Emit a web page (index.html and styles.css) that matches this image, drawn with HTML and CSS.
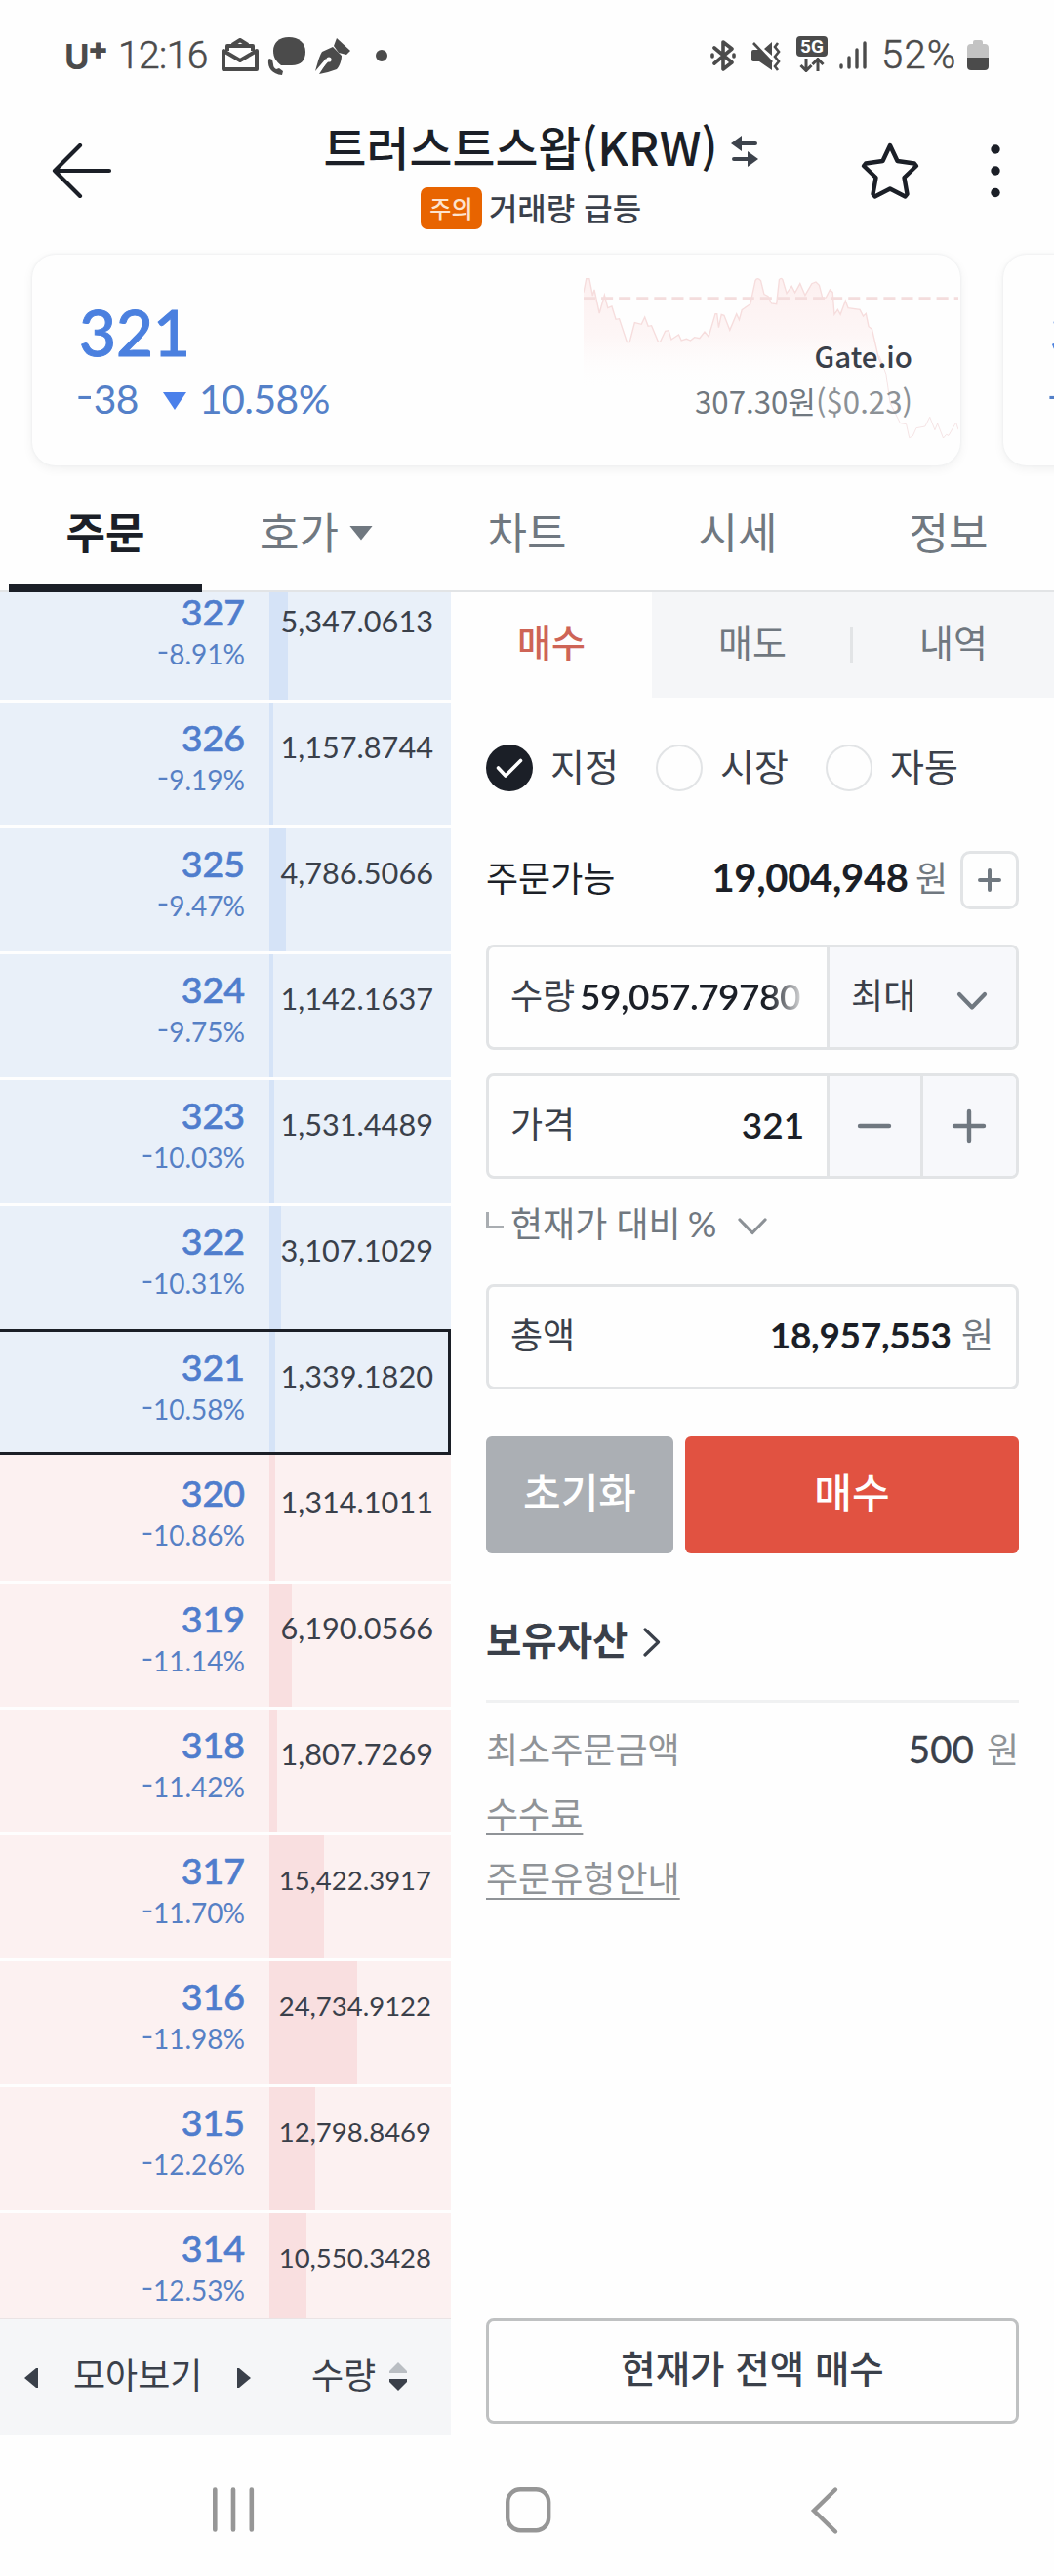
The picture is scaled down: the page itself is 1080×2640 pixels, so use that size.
FILE: index.html
```html
<!DOCTYPE html>
<html lang="ko">
<head>
<meta charset="utf-8">
<title>트러스트스왑(KRW)</title>
<link rel="stylesheet" href="styles.css">
</head>
<body>
<div class="phone">
  <div class="status">
    <div class="status-left">
      <span class="carrier">U<b>+</b></span>
      <span class="clock">12:16</span>
      <svg class="i-mail" width="38" height="34" viewBox="0 0 38 34" fill="none" stroke="#4b4b4b" stroke-width="4" stroke-linejoin="round"><path d="M11 7 19 2l8 5"/><path d="M6 13V8h26v5"/><path d="M2 13v19h34V13L19 23z"/></svg>
      <svg class="i-talk" width="40" height="40" viewBox="0 0 40 40" fill="#4b4b4b"><path d="M22 0C32 0 39 6 39 15s-5 14-14 14H14C9 25 6 21 6 14 6 6 12 0 22 0z"/><path d="M1 23c-1 9 4 15 14 16l1-4-4-3-3 1c-2-1-3-3-3-5l-1-5-3-1z"/></svg>
      <svg class="i-pen" width="36" height="38" viewBox="0 0 36 38" fill="#4b4b4b"><path d="M0 34C2 28 3 21 7 14l11-5 9 9c0 5-2 11-5 14-6 2-12 4-18 5l9-14-2-2z"/><path d="M22 0l14 13-4 4-8-2-5-7z"/><circle cx="14" cy="22" r="2.6" fill="#fff"/><path d="M14 22 2 36" stroke="#fff" stroke-width="1.8"/></svg>
      <i class="status-dot"></i>
    </div>
    <div class="status-right">
      <svg width="28" height="32" viewBox="0 0 28 32" fill="none" stroke="#4b4b4b" stroke-width="3.6" stroke-linejoin="round" stroke-linecap="round"><path d="M5 8 23 23 14 30V2l9 7L5 24"/><path d="M3 15v2M25 15v2"/></svg>
      <svg class="i-mute" width="30" height="30" viewBox="0 0 30 30" fill="#4b4b4b"><path d="M0 10q0-2 2-2h6l13 13v8L8 20H2q-2 0-2-2zM13 7l8-7v14z"/><path d="M2 1 21 21" stroke="#4b4b4b" stroke-width="2.6"/><path d="M27 1l-3 4 4 5-4 5 4 5-4 5 3 4" fill="none" stroke="#4b4b4b" stroke-width="2.6"/></svg>
      <div class="net"><span>5G</span><svg width="26" height="15" viewBox="0 0 26 15" fill="none" stroke="#4b4b4b" stroke-width="3"><path d="M7 1v12M1.500 8 7 13.500 12.500 8M19 14V2M13.500 7 19 1.500 24.500 7"/></svg></div>
      <svg class="i-signal" width="28" height="30" viewBox="0 0 28 30" stroke="#4b4b4b" stroke-width="3.4" stroke-linecap="round"><path d="M2 26v2M10 18v10M18 10v18M26 3v25"/></svg>
      <span class="percent">52%</span>
      <svg class="i-battery" width="22" height="32" viewBox="0 0 22 32"><path fill="#c3c3c3" d="M6 2q0-2 2-2h6q2 0 2 2v2h2q4 0 4 4v10H0V8q0-4 4-4h2z"/><path fill="#4b4b4b" d="M0 18h22v9q0 4-4 4H4q-4 0-4-4z"/></svg>
    </div>
  </div>

  <header class="header">
    <div class="header-back">
      <svg width="62" height="56" viewBox="0 0 62 56" fill="none" stroke="#1b1f27" stroke-width="4.200" stroke-linecap="round" stroke-linejoin="round"><path d="M29 2 3 28l26 26M3 28h56"/></svg>
    </div>
    <div class="header-title">
      <h1>트러스트스왑(KRW)
        <svg width="28" height="34" viewBox="0 0 28 34" fill="#3d434c"><path d="M0 9 11 1v6h14q2 0 2 2t-2 2H11v6zM28 25 17 17v6H3q-2 0-2 2t2 2h14v6z"/></svg>
      </h1>
      <p><span class="badge">주의</span>거래량 급등</p>
    </div>
    <div class="header-actions">
      <svg width="60" height="60" viewBox="0 0 60 60" fill="none" stroke="#1b1f27" stroke-width="4.400" stroke-linejoin="round"><path d="M30 4 37.500 20 55 22.500 57 25 44.500 37 47.500 54 45.500 56.500 30 48.500 14.500 56.500 12.500 54 15.500 37 3 25 5 22.500 22.500 20z"/></svg>
      <svg width="10" height="56" viewBox="0 0 10 56" fill="#1b1f27"><circle cx="5" cy="6" r="4.700"/><circle cx="5" cy="28" r="4.700"/><circle cx="5" cy="50.500" r="4.700"/></svg>
    </div>
  </header>

  <section class="carousel">
    <article class="card">
      <svg class="spark" width="384" height="170" viewBox="168 100 1115 510" preserveAspectRatio="none">
        <defs><linearGradient id="fade" x1="0" y1="0" x2="0" y2="1"><stop offset="0" stop-color="#fdf0f0"/><stop offset=".35" stop-color="#fdf6f6"/><stop offset=".7" stop-color="#fff" stop-opacity="0"/></linearGradient></defs>
        <path fill="url(#fade)" d="M168 150 176 108h9l10 52 5-18 15 72 15-56 10 40 12-5 12 40 10-2 23 72h8l15-60 20 5 10-22 10 28 10-2 20 50h6l15-33 10-2 8 28 22-15 8 18 15-5 12 5 12-10 15 3 15-20 12 15 20-70 5 0 5 42 8-40 8 3 17 45 20-50 8 18 8-30 25-18 15-72q6-12 16 0l10 42 12 6 10 22 15 2 8-75q6-8 10 0l12 42 15-22 10 20 15-28 15 36 20-36 12-5 10 10 10 40 10-2 12-24 8 8 5 68 10-15 8 15 15-42 8 22 35 5 10 20 8-8 8 40 10 8 20 90 14 30 18 90 16 40 18 12V610H168z"/>
        <path class="spark-base" d="M168 168H1283"/>
        <path class="spark-line" d="M168 150 176 108h9l10 52 5-18 15 72 15-56 10 40 12-5 12 40 10-2 23 72h8l15-60 20 5 10-22 10 28 10-2 20 50h6l15-33 10-2 8 28 22-15 8 18 15-5 12 5 12-10 15 3 15-20 12 15 20-70 5 0 5 42 8-40 8 3 17 45 20-50 8 18 8-30 25-18 15-72q6-12 16 0l10 42 12 6 10 22 15 2 8-75q6-8 10 0l12 42 15-22 10 20 15-28 15 36 20-36 12-5 10 10 10 40 10-2 12-24 8 8 5 68 10-15 8 15 15-42 8 22 35 5 10 20 8-8 8 40 10 8 20 90 14 30"/>
        <path class="spark-line thin" d="M1048 345 1068 402 1080 490 1110 552 1128 555 1137 597 1147 592 1158 567 1184 562 1198 533 1213 573 1221 553 1238 598 1247 587 1254 590 1276 550 1283 572"/>
      </svg>
      <div class="quote">
        <strong>321</strong>
        <p><span><i class="sign">-</i>38</span><i class="tri-down"></i><span>10.58%</span></p>
      </div>
      <div class="market">
        <b>Gate.io</b>
        <p>307.30원<span>($0.23)</span></p>
      </div>
    </article>
    <article class="card next"><div class="quote"><strong>321</strong><p><span><i class="sign">-</i>38</span></p></div></article>
  </section>

  <nav class="tabs">
    <a class="on">주문</a><a>호가<i class="tri-down grey"></i></a><a>차트</a><a>시세</a><a>정보</a>
  </nav>

  <main class="main">
    <section class="book">
      <div class="rows">
        <div class="row ask"><div class="price">327<small><i class="sign">-</i>8.91%</small></div><div class="qty"><i style="width:19px"></i><span>5,347.0613</span></div></div>
        <div class="row ask"><div class="price">326<small><i class="sign">-</i>9.19%</small></div><div class="qty"><i style="width:4px"></i><span>1,157.8744</span></div></div>
        <div class="row ask"><div class="price">325<small><i class="sign">-</i>9.47%</small></div><div class="qty"><i style="width:17px"></i><span>4,786.5066</span></div></div>
        <div class="row ask"><div class="price">324<small><i class="sign">-</i>9.75%</small></div><div class="qty"><i style="width:4px"></i><span>1,142.1637</span></div></div>
        <div class="row ask"><div class="price">323<small><i class="sign">-</i>10.03%</small></div><div class="qty"><i style="width:5px"></i><span>1,531.4489</span></div></div>
        <div class="row ask"><div class="price">322<small><i class="sign">-</i>10.31%</small></div><div class="qty"><i style="width:12px"></i><span>3,107.1029</span></div></div>
        <div class="row ask current"><div class="price">321<small><i class="sign">-</i>10.58%</small></div><div class="qty"><i style="width:6px"></i><span>1,339.1820</span></div></div>
        <div class="row bid first"><div class="price">320<small><i class="sign">-</i>10.86%</small></div><div class="qty"><i style="width:6px"></i><span>1,314.1011</span></div></div>
        <div class="row bid"><div class="price">319<small><i class="sign">-</i>11.14%</small></div><div class="qty"><i style="width:23px"></i><span>6,190.0566</span></div></div>
        <div class="row bid"><div class="price">318<small><i class="sign">-</i>11.42%</small></div><div class="qty"><i style="width:8px"></i><span>1,807.7269</span></div></div>
        <div class="row bid long"><div class="price">317<small><i class="sign">-</i>11.70%</small></div><div class="qty"><i style="width:56px"></i><span>15,422.3917</span></div></div>
        <div class="row bid long"><div class="price">316<small><i class="sign">-</i>11.98%</small></div><div class="qty"><i style="width:90px"></i><span>24,734.9122</span></div></div>
        <div class="row bid long"><div class="price">315<small><i class="sign">-</i>12.26%</small></div><div class="qty"><i style="width:47px"></i><span>12,798.8469</span></div></div>
        <div class="row bid long"><div class="price">314<small><i class="sign">-</i>12.53%</small></div><div class="qty"><i style="width:38px"></i><span>10,550.3428</span></div></div>
      </div>
      <div class="book-foot">
        <div class="group">
          <svg width="14" height="20" viewBox="0 0 14 20" fill="#3a404a"><path d="M0 10 12 0h2v20h-2z"/></svg>
          <span>모아보기</span>
          <svg width="14" height="20" viewBox="0 0 14 20" fill="#3a404a"><path d="M14 10 2 0H0v20h2z"/></svg>
        </div>
        <div class="sort"><span>수량</span>
          <svg width="18" height="29" viewBox="0 0 18 29"><path fill="#babec3" d="M9 0 18 9v2H0V9z"/><path fill="#3a404a" d="M9 29 18 20v-3H0v3z"/></svg>
        </div>
      </div>
    </section>

    <section class="order">
      <div class="side-tabs"><a class="on">매수</a><a>매도</a><a>내역</a></div>
      <div class="form">
        <div class="radios">
          <label><svg width="48" height="48" viewBox="0 0 48 48"><circle cx="24" cy="24" r="24" fill="#1b1f27"/><path d="M12.500 24 20 32 35.500 16.500" fill="none" stroke="#fff" stroke-width="3.600" stroke-linecap="round" stroke-linejoin="round"/></svg><span>지정</span></label>
          <label><i class="circle"></i><span>시장</span></label>
          <label><i class="circle"></i><span>자동</span></label>
        </div>
        <div class="balance">
          <span class="label">주문가능</span>
          <p><b>19,004,948</b> <em>원</em></p>
          <div class="add"><svg width="24" height="24" viewBox="0 0 24 24" stroke="#707880" stroke-width="4" stroke-linecap="round"><path d="M12 2v20M2 12h20"/></svg></div>
        </div>
        <div class="field">
          <div class="input"><span>수량</span><b class="clip">59,057.79780</b></div>
          <div class="select"><span>최대</span><svg width="32" height="20" viewBox="0 0 32 20" fill="none" stroke="#707880" stroke-width="4.200" stroke-linecap="round" stroke-linejoin="round"><path d="M3 3 16 16.500 29 3"/></svg></div>
        </div>
        <div class="field">
          <div class="input"><span>가격</span><b>321</b></div>
          <div class="step"><svg width="36" height="36" viewBox="0 0 36 36" stroke="#707880" stroke-width="4.400" stroke-linecap="round"><path d="M3 18h30"/></svg></div>
          <div class="step plus"><svg width="36" height="36" viewBox="0 0 36 36" stroke="#707880" stroke-width="4.400" stroke-linecap="round"><path d="M3 18h30M18 3v30"/></svg></div>
        </div>
        <div class="relative-price">
          <i class="elbow"></i><span>현재가 대비 <i class="pct">%</i></span>
          <svg width="30" height="18" viewBox="0 0 30 18" fill="none" stroke="#8c9196" stroke-width="3.200" stroke-linecap="round" stroke-linejoin="round"><path d="M2 2 15 15.500 28 2"/></svg>
        </div>
        <div class="field total">
          <div class="input"><span>총액</span><p><b>18,957,553</b> <em>원</em></p></div>
        </div>
        <div class="buttons"><button class="reset">초기화</button><button class="buy">매수</button></div>
        <h2>보유자산 <svg width="18" height="30" viewBox="0 0 18 30" fill="none" stroke="#3a404a" stroke-width="3.200" stroke-linecap="round" stroke-linejoin="round"><path d="M2 2 15.500 15 2 28"/></svg></h2>
        <hr>
        <div class="info"><span>최소주문금액</span><p><b>500</b> 원</p></div>
        <div class="info"><u>수수료</u></div>
        <div class="info"><u>주문유형안내</u></div>
        <button class="all">현재가 전액 매수</button>
      </div>
    </section>
  </main>

  <footer class="sysnav">
    <svg width="44" height="48" viewBox="0 0 44 48" stroke="#969696" stroke-width="4.600" stroke-linecap="round"><path d="M3.300 3.500v41M22 3.500v41M40.800 3.500v41"/></svg>
    <svg class="home" width="48" height="48" viewBox="0 0 48 48" fill="none" stroke="#969696" stroke-width="4.400"><rect x="3.200" y="3.200" width="42" height="42" rx="13"/></svg>
    <svg width="30" height="50" viewBox="0 0 30 50" fill="none" stroke="#969696" stroke-width="4.400" stroke-linecap="round" stroke-linejoin="miter"><path d="M26 3.500 4 25l22 21.500"/></svg>
  </footer>
</div>
</body>
</html>
```
FILE: styles.css
```css
* { box-sizing: border-box; margin: 0; padding: 0; }
body { background: #fdfdfd; font-family: "Noto Sans CJK KR", sans-serif; color: #3a404a; }
i, em { font-style: normal; }
svg { display: block; flex: none; }
.phone { width: 1080px; height: 2640px; display: flex; flex-direction: column; overflow: hidden; background: #fefefe; }

/* system status bar */
.status { height: 116px; padding: 0 66px; display: flex; justify-content: space-between; color: #4b4b4b; }
.status-left { display: flex; align-items: flex-start; }
.status-right { display: flex; align-items: flex-start; padding: 41px 0 0; margin-right: 1px; }
.carrier { font: 700 35px/40px Inter, sans-serif; margin-top: 38px; width: 55px; letter-spacing: -2px; white-space: nowrap; }
.carrier b { font-size: 31px; vertical-align: 10px; line-height: 1px; }
.clock, .percent { font: 300 39px/46px Roboto, sans-serif; -webkit-text-stroke: .5px #4b4b4b; }
.clock { margin-top: 34px; width: 106px; letter-spacing: -.6px; }
.i-mail { margin: 39px 9px 0 0; }
.i-talk { margin: 38px 9px 0 0; }
.i-pen { margin: 39px 26px 0 0; }
.status-dot { width: 12px; height: 12px; border-radius: 50%; background: #4b4b4b; margin-top: 51px; }
.i-mute { margin: 2px 0 0 15px; }
.net { width: 32px; margin: -4px 0 0 16px; display: flex; flex-direction: column; align-items: center; gap: 1px; }
.net span { width: 32px; height: 21px; border-radius: 4px; background: #4b4b4b; color: #fff; text-align: center; font: 700 19px/21px Roboto, sans-serif; }
.i-signal { margin: 0 0 0 12px; }
.percent { margin: -7px 0 0 15px; width: 88px; font-size: 40px; letter-spacing: 1.2px; }

/* title bar */
.header { height: 129px; display: flex; }
.header-back { width: 240px; padding: 31px 0 0 53px; }
.header-title { width: 608px; display: flex; flex-direction: column; align-items: center; }
.header-title h1 { font-size: 47.800px; line-height: 68px; font-weight: 500; color: #1b1f27; display: flex; align-items: center; gap: 14px; margin: 0 0 8px 21px; }
.header-title h1 svg { margin-top: 9px; }
.header-title p { height: 43px; display: flex; align-items: center; font-size: 32px; line-height: 38px; font-weight: 500; padding-bottom: 3px; }
.badge { height: 43px; width: 63px; border-radius: 7px; background: #e86400; color: #fde3cf; font-size: 24px; line-height: 41px; text-align: center; margin: 3px 7px 0 0; }
.header-actions { display: flex; padding: 29px 0 0 34px; gap: 73px; }
.header-actions svg + svg { margin-top: 2px; }

/* price cards */
.carousel { height: 245px; padding: 16px 0 0 33px; display: flex; gap: 44px; overflow: hidden; }
.card { position: relative; flex: none; width: 951px; height: 216px; border-radius: 24px; background: #fefefe; box-shadow: 0 0 2px 1px #f0f1f2, 0 3px 12px rgba(0,0,0,.06); display: flex; justify-content: space-between; padding: 44px 49px 0 48px; }
.spark { position: absolute; left: 565px; top: 22px; }
.spark-line { fill: none; stroke: #f6dddd; stroke-width: 4; }
.spark-line.thin { stroke-width: 2.500; stroke: #f3dfe0; }
.spark-base { fill: none; stroke: #f4dddd; stroke-width: 8; stroke-dasharray: 35 17.500; }
.quote { font-family: Lato, sans-serif; color: #4b80df; }
.quote strong { display: block; font-size: 65.500px; line-height: 70px; font-weight: 500; -webkit-text-stroke: 1px #4b80df; }
.quote p { display: flex; font-size: 40.800px; line-height: 50px; margin-top: 9px; color: #5480c8; letter-spacing: -.5px; }
.quote .tri-down { margin: 18px 13px 0 25px; }
.tri-down { width: 24px; height: 18px; background: #4b80ea; clip-path: polygon(0 0, 100% 0, 50% 100%); }
.tri-down.grey { background: #707880; height: 15px; margin: 5px 0 0 11px; }
.sign { display: inline-block; vertical-align: .1em; line-height: 1px; transform: scaleX(1.25); transform-origin: right; }
.market { position: relative; text-align: right; padding-top: 39px; }
.market b { display: block; font-size: 29.500px; line-height: 40px; font-weight: 500; }
.market p { font-size: 31.200px; line-height: 40px; margin-top: 7px; color: #707880; }
.market span { color: #8c9196; }

.tabs { height: 117px; border-bottom: 2px solid #e2e4e6; display: flex; }
.tabs a { position: relative; width: 216px; display: flex; justify-content: center; align-items: center; font-size: 44px; padding-bottom: 8px; color: #707880; }
.tabs .on { color: #1b1f27; font-weight: 700; }
.tabs .on::after { content: ""; position: absolute; left: 9px; width: 198px; bottom: -2px; height: 9px; background: #1b1f27; }

.main { height: 1889px; display: flex; }

/* order book */
.book { width: 462px; display: flex; flex-direction: column; }
.rows { height: 1769px; overflow: hidden; }
.row { height: 129px; border-top: 3px solid #fefefe; display: flex; font-family: Lato, sans-serif; }
.row:first-child { margin-top: -19px; }
.ask { background: #e9f0f9; }
.bid { background: #fcf1f1; }
.row.current { border: 3px solid #1b1f27; border-left: 0; }
.row.first { border-top-color: #fcf1f1; }
.price { width: 276px; flex: none; padding: 12.500px 25px 0 0; text-align: right; font-size: 37.500px; line-height: 46px; font-weight: 500; color: #4f7dcd; -webkit-text-stroke: .6px #4f7dcd; }
.price small { display: block; font-size: 28px; line-height: 36px; margin-top: 2px; font-weight: 400; color: #5680c5; -webkit-text-stroke: 0; }
.qty { position: relative; width: 186px; flex: none; padding: 26px 18px 0 0; text-align: right; font-size: 30.700px; line-height: 40px; white-space: nowrap; }
.qty i { position: absolute; left: 0; top: 0; bottom: 0; background: #d5e3f7; }
.bid .qty i { background: #f9dfe0; }
.bid.first .qty i { top: -3px; }
.qty span { position: relative; }
.long .qty { font-size: 27.500px; padding-right: 20px; }
.book-foot { height: 120px; background: #f5f6f8; border-top: 1px solid #e9e3e4; display: flex; font-size: 36px; line-height: 110px; }
.group { width: 257px; margin-left: 25px; display: flex; gap: 36px; }
.group svg { margin-top: 50px; }
.book-foot span { height: 110px; }
.sort { display: flex; gap: 14px; margin-left: 37px; }
.sort svg { margin-top: 44px; }

/* order form */
.order { width: 618px; display: flex; flex-direction: column; }
.side-tabs { height: 108px; display: flex; }
.side-tabs a { flex: 1; display: flex; align-items: center; justify-content: center; padding-bottom: 10px; font-size: 38px; color: #707880; background: #f5f6f8; position: relative; }
.side-tabs .on { background: none; color: #ce6456; font-weight: 500; }
.side-tabs a:last-child::before { content: ""; position: absolute; left: -3px; top: 36px; width: 3px; height: 36px; background: #e2e4e6; }
.form { flex: 1; padding: 48px 36px 12px; display: flex; flex-direction: column; }
.radios { height: 48px; display: flex; font-size: 38px; line-height: 41px; }
.radios label { width: 174px; display: flex; gap: 18px; }
.circle { width: 48px; height: 48px; border-radius: 50%; border: 2.500px solid #e2e4e6; }
.balance { height: 60px; margin-top: 61px; display: flex; font-size: 36px; line-height: 52px; }
.label { color: #1b1f27; }
.balance p { margin-left: auto; white-space: nowrap; }
.balance b, .input b, .info b { font-family: Lato, sans-serif; line-height: 1px; color: #1b1f27; }
.balance b { font-size: 40px; letter-spacing: -.3px; }
em { color: #707880; }
.balance em { margin-left: -3px; }
.add { width: 60px; height: 60px; border: 3px solid #e2e4e6; border-radius: 10px; margin-left: 13px; display: grid; place-items: center; }
.field { height: 108px; margin-top: 24px; border: 3px solid #e2e4e6; border-radius: 8px; display: flex; overflow: hidden; font-size: 36px; line-height: 95px; flex: none; }
.balance + .field { margin-top: 36px; }
.input { width: 348px; padding: 0 23px 0 22px; display: flex; justify-content: space-between; white-space: nowrap; }
.input b { line-height: inherit; font-size: 37px; font-weight: 600; padding-top: 2px; }
.input > span { flex: none; }
.input .clip { width: 230px; letter-spacing: -.5px; -webkit-mask-image: linear-gradient(90deg, #000 84%, transparent 102%); mask-image: linear-gradient(90deg, #000 84%, transparent 102%); }
.select { width: 195px; background: #f7f8fb; border-left: 3px solid #e2e4e6; padding-left: 22px; display: flex; }
.select svg { margin: 45px 0 0 42px; }
.step { width: 96px; background: #f7f8fb; border-left: 3px solid #e2e4e6; display: grid; place-items: center; }
.step.plus { width: 99px; }
.relative-price { height: 46px; margin-top: 24px; display: flex; font-size: 36px; line-height: 40px; color: #707880; }
.relative-price span { width: 211px; white-space: nowrap; word-spacing: -1px; }
.pct { font-family: Lato, sans-serif; font-size: 37px; line-height: 1px; margin-left: -2px; }
.elbow { width: 18px; height: 17px; margin: 10px 7px 0 0; border: solid #a9adb1; border-width: 0 0 3px 3px; }
.relative-price svg { margin: 16px 0 0 22px; }
.total { margin-top: 38px; }
.total .input { width: 100%; }
.total .input b { font-size: 37px; line-height: 1px; font-weight: 700; letter-spacing: -.3px; }
.buttons { display: flex; gap: 12px; margin-top: 48px; flex: none; }
button { font: 500 42px "Noto Sans CJK KR", sans-serif; border: 0; }
.buttons button { height: 120px; border-radius: 6px; color: #fff; padding-bottom: 10px; }
.reset { width: 192px; background: #abafb4; }
.buttons .buy { width: 342px; background: #e15241; }
h2 { height: 60px; margin-top: 61px; font-size: 39.500px; line-height: 52px; font-weight: 700; display: flex; gap: 16px; flex: none; }
h2 svg { margin-top: 15px; }
hr { border: 0; height: 3px; background: #f0f1f2; margin: 29px 0 17px; flex: none; }
.info { height: 66px; line-height: 59px; font-size: 36px; color: #8f9397; display: flex; justify-content: space-between; }
.info b { font-size: 38.500px; font-weight: 400; color: #3a404a; margin-right: 3px; -webkit-text-stroke: .4px #3a404a; }
u { text-decoration-thickness: 2px; text-underline-offset: 6px; text-decoration-skip-ink: none; }
.all { height: 108px; margin-top: auto; border: 3px solid #bfc1c2; border-radius: 8px; background: none; color: #3a404a; font-size: 38.500px; padding-bottom: 10px; flex: none; }

.sysnav { height: 144px; display: flex; padding: 52px 220px 0 217px; justify-content: space-between; }
.home { margin-right: 9px; }
```
